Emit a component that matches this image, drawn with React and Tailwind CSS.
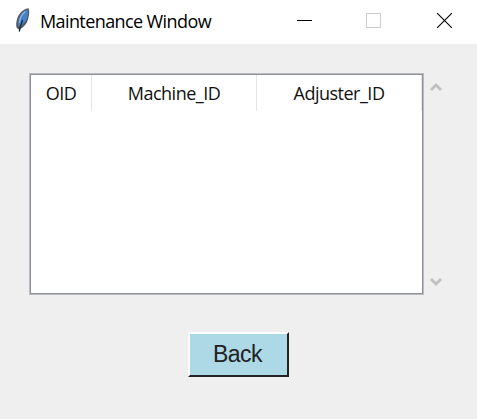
import React from 'react';

const ui = "font-['Open_Sans','Noto_Sans',sans-serif] whitespace-nowrap";

function Feather() {
  return (
    <svg width="16" height="26" viewBox="0 0 16 26" className="shrink-0">
      <path d="M14.600 1.200C10 1.500 4.800 6 3.200 11.500c-1.200 3.600-1.400 7-.4 9.500l2 1.500.5 2.500.8-2.800C10 20 13 16.500 14 12.500c1-3.500 2-8 .6-11.300z" fill="#555c64" />
      <path d="M13.600 2.500C9.500 4 6 8.500 4.800 13c-.8 2.800-1 5 .1 6.500C9 17 12 14.500 13 11c.9-3 1.400-6 .6-8.500z" fill="#4383cd" />
      <path d="M11.300 4.500C8 7 5.800 12 5.300 16" stroke="#8db8e8" strokeWidth="1.400" fill="none" />
      <path d="M8.500 13C7 17 6 20 5.300 24.500" stroke="#18283c" strokeWidth="1.300" fill="none" />
    </svg>
  );
}

function TitleBar() {
  return (
    <header className="flex h-11 shrink-0 items-start bg-white">
      <div className="flex w-[297px] pl-[14px] pt-[7px]">
        <Feather />
        <h1 className={`${ui} ml-[10px] mt-[1px] text-[18px] leading-[27px] tracking-[-0.6px] text-black`}>Maintenance Window</h1>
      </div>
      <div className="flex pt-[13px]">
        <svg width="15" height="15" shapeRendering="crispEdges"><path d="M0 7.500h15" stroke="#000" /></svg>
        <svg width="15" height="15" className="ml-[54px]" shapeRendering="crispEdges"><rect x=".5" y=".5" width="14" height="14" fill="none" stroke="#ccc" /></svg>
        <svg width="15" height="15" className="ml-[56px]"><path d="M0 0L15 15M15 0L0 15" stroke="#000" strokeWidth="1.100" /></svg>
      </div>
    </header>
  );
}

function Chevron({ down }) {
  return (
    <svg width="12" height="10" viewBox="0 0 12 10" className={down ? 'rotate-180' : ''}>
      <path d="M1 8L6 3L11 8" fill="none" stroke="#c0c0c0" strokeWidth="2.800" />
    </svg>
  );
}

export default function App() {
  return (
    <div className="flex h-[419px] w-[477px] flex-col overflow-hidden bg-[#efefef]">
      <TitleBar />
      <main className="flex flex-col px-[29px] pt-[29px]">
        <div className="flex">
          <div className="h-[222px] w-[395px] border border-[#b9bbbf] bg-white">
            <div className="h-full border border-[#8e9197]">
              <div className={`${ui} flex h-9 text-[18px] leading-[36px] tracking-[-0.5px] text-[#111]`}>
                <div className="w-[61px] border-r border-[#e5e5e5] text-center">OID</div>
                <div className="w-[165px] border-r border-[#e5e5e5] text-center">Machine_ID</div>
                <div className="w-[165px] border-r border-[#e5e5e5] text-center">Adjuster_ID</div>
              </div>
            </div>
          </div>
          <div className="ml-[6px] flex flex-col justify-between pb-[8px] pt-[9px]">
            <Chevron />
            <Chevron down />
          </div>
        </div>
        <button className="ml-[159px] mt-[37px] h-[45px] w-[101px] border-2 border-b-[#222] border-l-white border-r-[#222] border-t-white bg-[#add8e6] pr-[2px] font-['Liberation_Sans',sans-serif] text-[23px] leading-[41px] tracking-[-0.5px] text-[#222]">
          Back
        </button>
      </main>
    </div>
  );
}
